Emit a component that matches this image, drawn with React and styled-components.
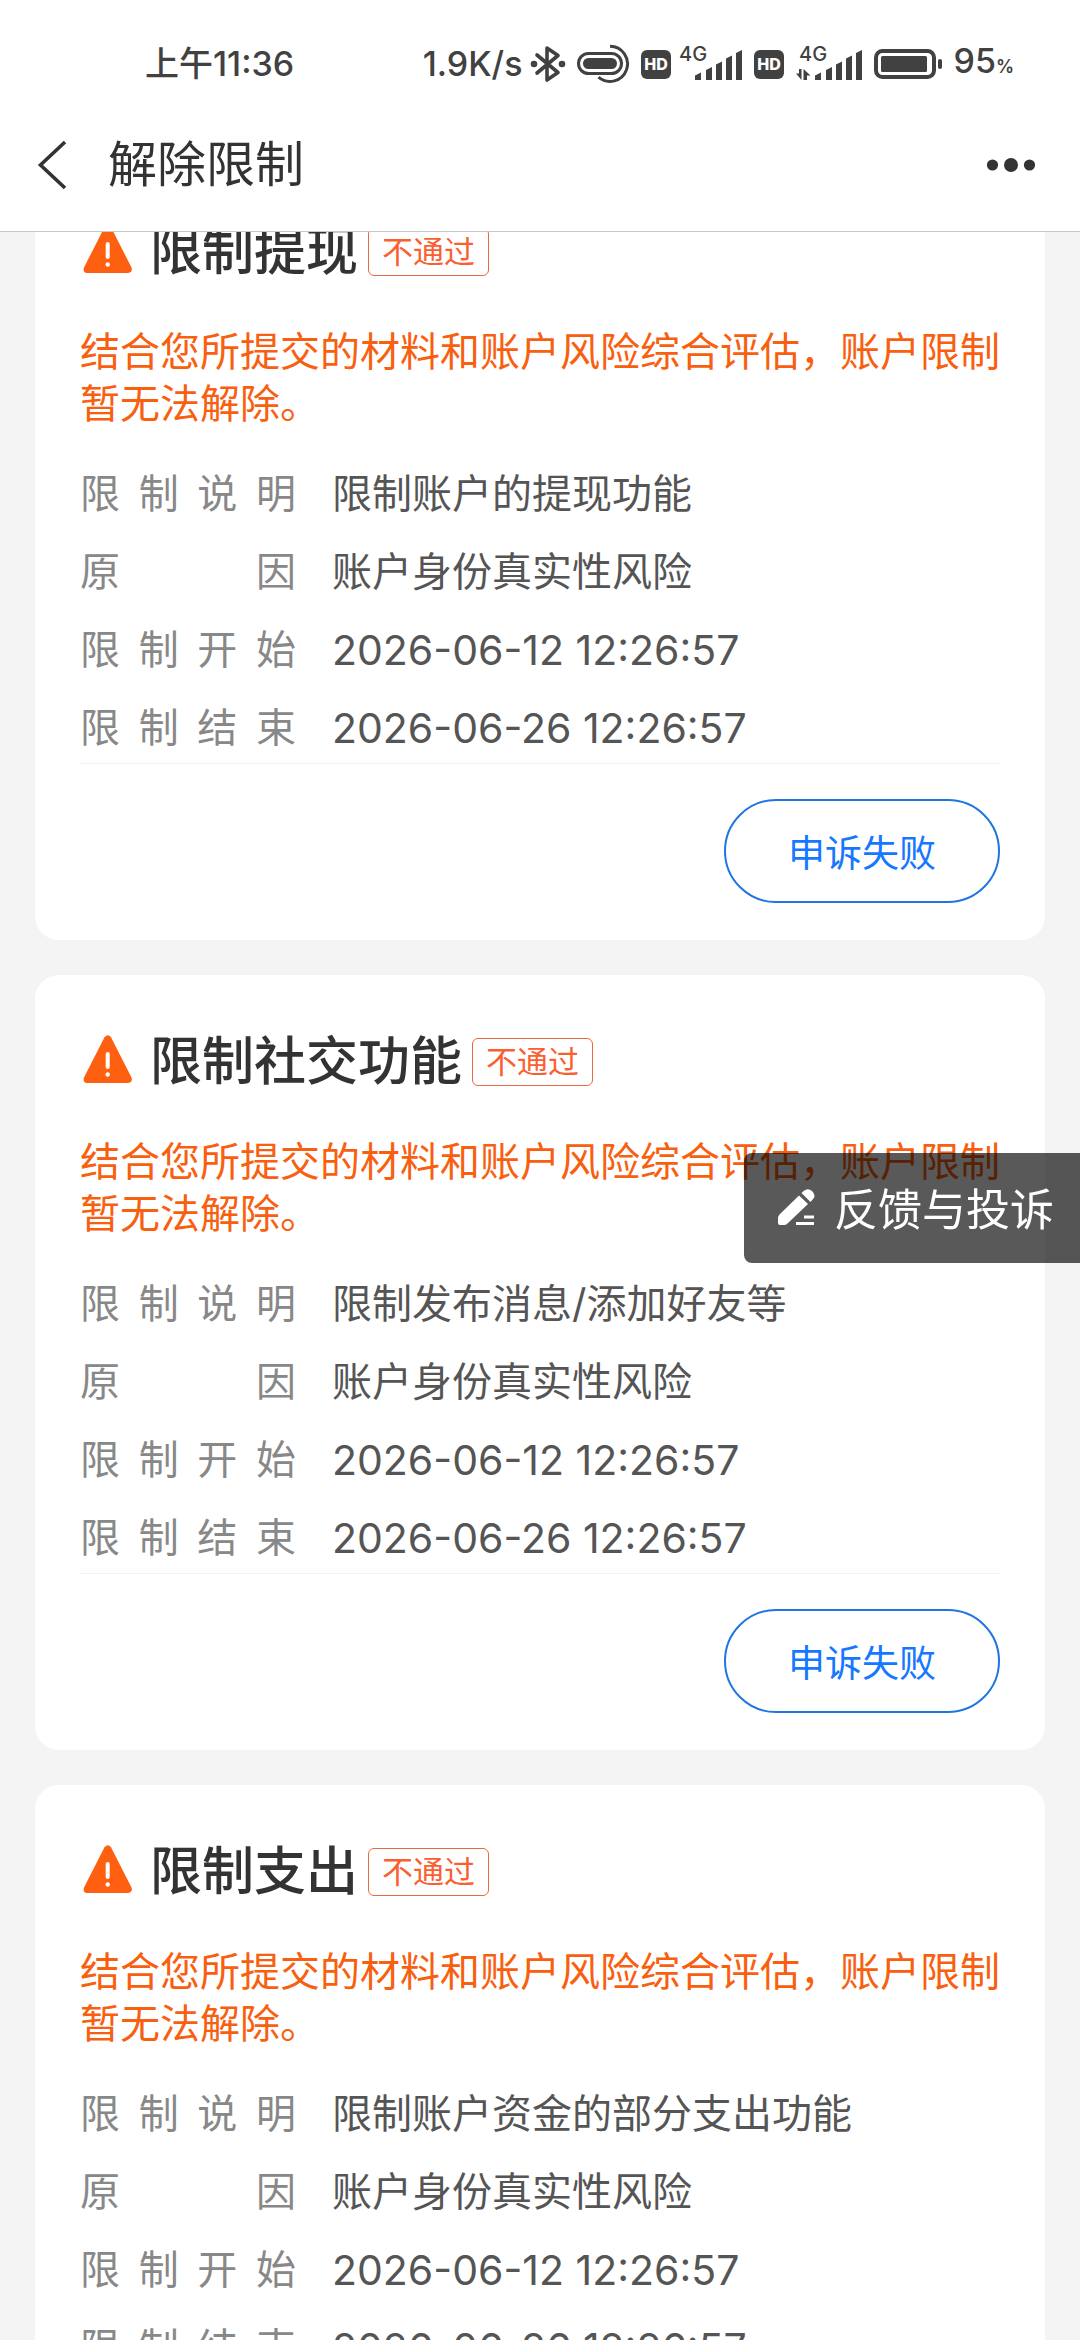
import React, { useLayoutEffect, useRef } from 'react';
import styled, { createGlobalStyle } from 'styled-components';

const GlobalStyle = createGlobalStyle`
  * {
    box-sizing: border-box;
  }

  body {
    margin: 0;
    background: #f4f4f4;
    color: #333;
    font-family: Inter, 'Noto Sans CJK SC', sans-serif;
  }

  h1, h2, p, dl, dd {
    margin: 0;
  }

  button {
    font-family: inherit;
    cursor: pointer;
  }
`;

const Screen = styled.div`
  display: flex;
  flex-direction: column;
  height: 100vh;
`;

const Header = styled.header`
  flex: none;
  background: #fff;
  border-bottom: 1px solid #c8c8c8;
`;

const StatusBar = styled.div`
  display: flex;
  align-items: center;
  justify-content: space-between;
  height: 130px;
  padding: 0 66px 2px 145px;
  color: #414141;
  font-size: 34px;
  line-height: 38px;
  font-weight: 500;
`;

const StatusIcons = styled.div`
  display: flex;
  align-items: center;
  gap: 11px;
`;

const StatusGroup = styled.span`
  display: flex;
  align-items: center;
  gap: ${props => props.$gap || 8}px;
`;

const Percent = styled.small`
  font-size: 18px;
  font-weight: 600;
`;

const NavBar = styled.div`
  display: flex;
  align-items: center;
  height: 101px;
  padding: 0 44px 32px 36px;
`;

const IconButton = styled.button`
  display: flex;
  padding: 0;
  border: none;
  background: none;
  color: #333;
`;

const NavTitle = styled.h1`
  flex: 1;
  padding-left: 40px;
  font-size: 49px;
  line-height: 68px;
  font-weight: 400;
`;

const CardList = styled.main`
  display: flex;
  flex-direction: column;
  flex: 1;
  gap: 35px;
  min-height: 0;
  padding: 35px;
  overflow-y: auto;
  scrollbar-width: none;
`;

const Card = styled.section`
  flex: none;
  padding: 49px 45px 37px;
  border-radius: 24px;
  background: #fff;
`;

const CardHeader = styled.div`
  display: flex;
  align-items: center;
  height: 76px;
`;

const CardTitle = styled.h2`
  padding: 0 10px 0 16px;
  font-size: 52px;
  line-height: 76px;
  font-weight: 500;
`;

const Tag = styled.span`
  padding: 0 13px;
  border: 1px solid #e8683f;
  border-radius: 6px;
  color: #fa5f32;
  font-size: 31px;
  line-height: 46px;
`;

const Message = styled.p`
  margin-top: 36px;
  color: #f8600f;
  font-size: 40px;
  line-height: 52px;
`;

const Details = styled.dl`
  display: flex;
  flex-direction: column;
  gap: 26px;
  margin-top: 38px;
  padding-bottom: 9px;
  border-bottom: 1px solid #f2f2f2;
`;

const DetailRow = styled.div`
  display: flex;
  gap: 36px;
  font-size: 40px;
  line-height: 52px;
`;

const DetailLabel = styled.dt`
  width: 216px;
  color: #888;
  text-align: justify;
  text-align-last: justify;
`;

const DetailValue = styled.dd`
  flex: 1;
  color: #555;
  font-size: ${props => (props.$date ? 41 : 40)}px;
`;

const CardFooter = styled.div`
  display: flex;
  justify-content: flex-end;
  margin-top: 35px;
`;

const AppealButton = styled.button`
  height: 104px;
  padding: 0 62px;
  border: 2px solid #1f76e0;
  border-radius: 52px;
  background: #fff;
  color: #1677ff;
  font-size: 37px;
`;

const FeedbackButton = styled.button`
  position: fixed;
  top: 1153px;
  right: 0;
  display: flex;
  align-items: center;
  gap: 19px;
  height: 110px;
  padding: 0 26px 3px 34px;
  border: none;
  border-radius: 8px 0 0 8px;
  background: rgba(0, 0, 0, 0.65);
  color: #fff;
  font-size: 44px;
`;

const BluetoothIcon = () => (
  <svg width="36" height="40" viewBox="0 0 36 40" fill="none" stroke="currentColor" strokeWidth="3.6" strokeLinejoin="round" strokeLinecap="round">
    <path d="M7 11 28 28.500 17 36V4l11 7.500L7 29" />
    <circle cx="4" cy="20" r="1.500" />
    <circle cx="32" cy="20" r="1.500" />
  </svg>
);

const CapsuleIcon = () => (
  <svg width="53" height="40" viewBox="0 0 53 40" fill="none" stroke="currentColor">
    <rect x="1.500" y="9.500" width="43" height="20" rx="10" strokeWidth="3" />
    <rect x="6" y="14" width="34" height="11" rx="5.500" fill="currentColor" stroke="none" />
    <path d="M33 2.200a17.600 17.600 0 1 1-11.500 31" strokeWidth="3" />
  </svg>
);

const HdIcon = () => (
  <svg width="30" height="29" viewBox="0 0 30 29">
    <rect width="30" height="29" rx="6" fill="currentColor" />
    <text x="15" y="20" textAnchor="middle" fill="#fff" fontSize="16" fontWeight="800">HD</text>
  </svg>
);

const SignalIcon = ({ arrows }) => (
  <svg width={arrows ? 67 : 64} height="48" viewBox={arrows ? '-3 -4 67 48' : '0 -4 64 48'} fill="currentColor">
    <text x="0" y="17" fontSize="20" fontWeight="500">4G</text>
    <path d="M16 36v-4.500l6-3V36zM27 36V26l6-3v13zM37 36V20.500l6-3V36zM47 36V14.500l6-3V36zM57 36V9l6-3v30z" />
    {arrows && <path d="M2.500 25v11L-3 29.500h3V25zM4.500 36V25l7 6.500H8V36z" />}
  </svg>
);

const BatteryIcon = () => (
  <svg width="68" height="30" viewBox="0 0 68 30">
    <rect x="2" y="2" width="58" height="26" rx="6.500" fill="none" stroke="currentColor" strokeWidth="4" />
    <rect x="7" y="7" width="46" height="16" rx="1.500" fill="currentColor" />
    <rect x="64" y="10" width="4" height="10" rx="2" fill="currentColor" />
  </svg>
);

const BackIcon = () => (
  <svg width="32" height="50" viewBox="0 0 32 50" fill="none" stroke="currentColor" strokeWidth="3.600">
    <path d="M29 2 4.500 25 29 48" />
  </svg>
);

const MoreIcon = () => (
  <svg width="50" height="16" viewBox="0 0 50 16" fill="currentColor">
    <circle cx="6.500" cy="8" r="5.600" />
    <circle cx="25" cy="8" r="7" />
    <circle cx="43.500" cy="8" r="5.600" />
  </svg>
);

const WarningIcon = () => (
  <svg width="54" height="54" viewBox="0 0 54 54">
    <path d="M24.500 2.200Q28 -1.800 31 2.200L51.500 42.500Q53 47.500 48 48H7Q2.500 47.500 4 42.500Z" fill="#ff5f10" />
    <path d="M27.700 19v13" stroke="#fff" strokeWidth="4" strokeLinecap="round" />
    <circle cx="27.700" cy="39.500" r="2.200" fill="#fff" />
  </svg>
);

const PencilIcon = () => (
  <svg width="37" height="38" viewBox="0 0 37 38" fill="currentColor">
    <path d="M21 7.500 30 16 9.500 35.500Q8 37 6 37H2Q0 37 0 35V30Q0 28 1.500 26.500Z" />
    <path d="M23.500 5 26 2.700Q30 -.5 34 3Q38 7 35.500 10.500L32.500 14Z" />
    <path d="M26 27.500h10v3H26zM18 34h18v3H18z" />
  </svg>
);

const restrictions = [
  { title: '限制提现', description: '限制账户的提现功能' },
  { title: '限制社交功能', description: '限制发布消息/添加好友等' },
  { title: '限制支出', description: '限制账户资金的部分支出功能' }
];

const RestrictionCard = ({ title, description }) => {
  const details = [
    { label: '限制说明', value: description },
    { label: '原因', value: '账户身份真实性风险' },
    { label: '限制开始', value: '2026-06-12 12:26:57', date: true },
    { label: '限制结束', value: '2026-06-26 12:26:57', date: true }
  ];

  return (
    <Card>
      <CardHeader>
        <WarningIcon />
        <CardTitle>{title}</CardTitle>
        <Tag>不通过</Tag>
      </CardHeader>
      <Message>结合您所提交的材料和账户风险综合评估，账户限制暂无法解除。</Message>
      <Details>
        {details.map(({ label, value, date }) => (
          <DetailRow key={label}>
            <DetailLabel>{label}</DetailLabel>
            <DetailValue $date={date}>{value}</DetailValue>
          </DetailRow>
        ))}
      </Details>
      <CardFooter>
        <AppealButton type="button">申诉失败</AppealButton>
      </CardFooter>
    </Card>
  );
};

export default function App() {
  const listRef = useRef(null);

  // open with the first card partly scrolled under the header
  useLayoutEffect(() => {
    listRef.current.scrollTop = 102;
  }, []);

  return (
    <Screen>
      <GlobalStyle />
      <Header>
        <StatusBar>
          <span>上午11:36</span>
          <StatusIcons>
            <StatusGroup>
              <span>1.9K/s</span>
              <BluetoothIcon />
            </StatusGroup>
            <CapsuleIcon />
            <StatusGroup>
              <HdIcon />
              <SignalIcon />
            </StatusGroup>
            <StatusGroup $gap={12}>
              <HdIcon />
              <SignalIcon arrows />
            </StatusGroup>
            <BatteryIcon />
            <span>95<Percent>%</Percent></span>
          </StatusIcons>
        </StatusBar>
        <NavBar>
          <IconButton type="button" aria-label="返回">
            <BackIcon />
          </IconButton>
          <NavTitle>解除限制</NavTitle>
          <IconButton type="button" aria-label="更多">
            <MoreIcon />
          </IconButton>
        </NavBar>
      </Header>
      <CardList ref={listRef}>
        {restrictions.map(item => (
          <RestrictionCard key={item.title} {...item} />
        ))}
      </CardList>
      <FeedbackButton type="button">
        <PencilIcon />
        反馈与投诉
      </FeedbackButton>
    </Screen>
  );
}
